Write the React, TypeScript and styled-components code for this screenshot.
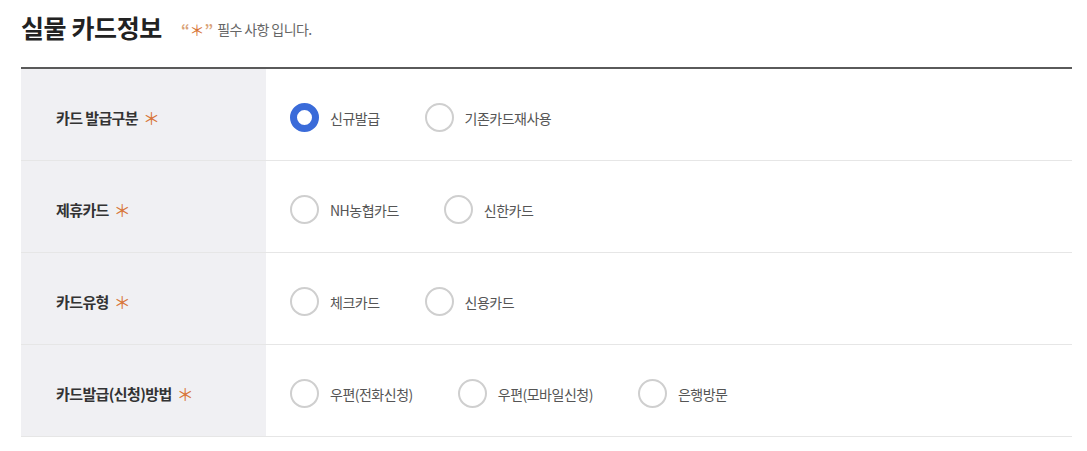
import React, { useState } from 'react';
import styled, { createGlobalStyle } from 'styled-components';

type Option = { value: string; label: string };
type Field = { key: string; title: string; options: Option[] };

const fields: Field[] = [
  {
    key: 'issue',
    title: '카드 발급구분',
    options: [
      { value: 'new', label: '신규발급' },
      { value: 'reuse', label: '기존카드재사용' },
    ],
  },
  {
    key: 'partner',
    title: '제휴카드',
    options: [
      { value: 'nh', label: 'NH농협카드' },
      { value: 'shinhan', label: '신한카드' },
    ],
  },
  {
    key: 'type',
    title: '카드유형',
    options: [
      { value: 'check', label: '체크카드' },
      { value: 'credit', label: '신용카드' },
    ],
  },
  {
    key: 'method',
    title: '카드발급(신청)방법',
    options: [
      { value: 'phone', label: '우편(전화신청)' },
      { value: 'mobile', label: '우편(모바일신청)' },
      { value: 'bank', label: '은행방문' },
    ],
  },
];

const App: React.FC = () => {
  const [values, setValues] = useState<Record<string, string>>({ issue: 'new' });

  return (
    <>
      <GlobalStyle />
      <Page>
        <Header>
          <Title>실물 카드정보</Title>
          <Note>
            <Quote>“</Quote>
            <Star $size={15}>＊</Star>
            <Quote>”</Quote>
            <NoteText>필수 사항 입니다.</NoteText>
          </Note>
        </Header>
        <Table>
          {fields.map((f) => (
            <Row key={f.key}>
              <Label>
                {f.title}
                <Star $size={17}>＊</Star>
              </Label>
              <Cell>
                {f.options.map((o) => (
                  <RadioItem key={o.value}>
                    <HiddenInput
                      type="radio"
                      name={f.key}
                      checked={values[f.key] === o.value}
                      onChange={() => setValues({ ...values, [f.key]: o.value })}
                    />
                    <Circle $checked={values[f.key] === o.value} />
                    <RadioText>{o.label}</RadioText>
                  </RadioItem>
                ))}
              </Cell>
            </Row>
          ))}
        </Table>
      </Page>
    </>
  );
};

const GlobalStyle = createGlobalStyle`
  body {
    margin: 0;
    background: #fff;
    font-family: "Noto Sans CJK KR", "Noto Sans", sans-serif;
  }
`;

const Page = styled.div`
  padding: 0 15px 0 21px;
  width: 1051px;
`;

const Header = styled.div`
  display: flex;
  align-items: center;
  height: 67px;
  padding-bottom: 14px;
  box-sizing: border-box;
`;

const Title = styled.h2`
  margin: 0;
  font-size: 25px;
  font-weight: 700;
  color: #222;
  letter-spacing: -0.4px;
`;

const Note = styled.span`
  display: flex;
  align-items: center;
  margin-left: 19px;
  margin-top: 5px;
  font-size: 14px;
  color: #666;
`;

const Quote = styled.span`
  color: #d9a37a;
  font-weight: 700;
  font-size: 15px;
`;

const NoteText = styled.span`
  margin-left: 4px;
  letter-spacing: -0.6px;
`;

const Star = styled.span<{ $size: number }>`
  color: #d8763a;
  font-weight: 400;
  font-size: ${(p) => p.$size}px;
  line-height: 1;
`;

const Table = styled.div`
  border-top: 2px solid #5a5a5a;
`;

const Row = styled.div`
  display: grid;
  grid-template-columns: 245px 1fr;
  height: 92px;
  border-bottom: 1px solid #e6e6e6;
  box-sizing: border-box;
`;

const Label = styled.div`
  display: flex;
  align-items: center;
  gap: 5px;
  padding-left: 35px;
  padding-top: 5px;
  background: #f0f0f3;
  font-size: 15px;
  font-weight: 700;
  color: #333;
  letter-spacing: -0.6px;
`;

const Cell = styled.div`
  display: flex;
  align-items: center;
  padding-left: 24px;
  padding-top: 6px;
`;

const RadioItem = styled.label`
  display: flex;
  align-items: center;
  margin-right: 45px;
  cursor: pointer;
`;

const HiddenInput = styled.input`
  display: none;
`;

const Circle = styled.span<{ $checked?: boolean }>`
  width: 29px;
  height: 29px;
  box-sizing: border-box;
  border-radius: 50%;
  border: ${(p) => (p.$checked ? '7px solid #3a6bd9' : '2px solid #cfcfcf')};
  background: #fff;
`;

const RadioText = styled.span`
  margin-left: 11px;
  font-size: 14px;
  color: #555;
  letter-spacing: -0.5px;
`;

export default App;
